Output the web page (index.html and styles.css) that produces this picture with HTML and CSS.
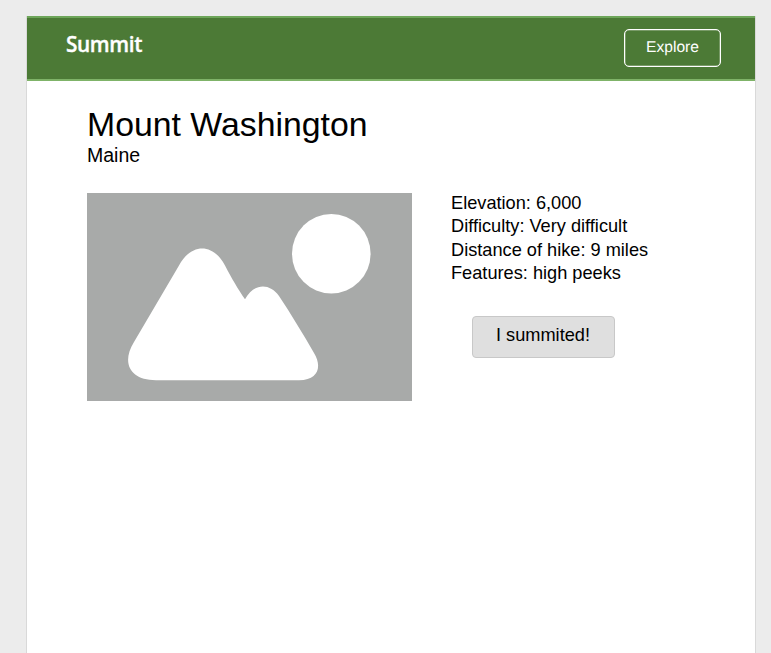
FILE: index.html
```html
<!DOCTYPE html>
<html lang="en">
<head>
<meta charset="utf-8">
<title>Summit</title>
<link rel="stylesheet" href="styles.css">
</head>
<body>
<div class="page">
  <header class="bar">
    <div class="brand">Summit</div>
    <button class="explore">Explore</button>
  </header>
  <main class="content">
    <h1 class="title">Mount Washington</h1>
    <div class="place">Maine</div>
    <div class="columns">
      <svg class="photo" viewBox="0 0 325 208" width="325" height="208" aria-hidden="true">
        <rect width="325" height="208" fill="#a8aaa9"/>
        <ellipse cx="244.3" cy="60.700" rx="39.3" ry="39.8" fill="#fff"/>
        <path fill="#fff" d="M92 72.500C104 50 126 49.500 138 72.500C145 86 151 96 158 106.300C167 89.500 183 90 192 103C204 121 216 141 227 160C235 173 232 187.300 212 187.300H69C43 187.300 34 170 47 149Z"/>
      </svg>
      <section class="details">
        <ul class="facts">
          <li>Elevation: 6,000</li>
          <li>Difficulty: Very difficult</li>
          <li>Distance of hike: 9 miles</li>
          <li>Features: high peeks</li>
        </ul>
        <button class="summited">I summited!</button>
      </section>
    </div>
  </main>
</div>
</body>
</html>
```
FILE: styles.css
```css
* { box-sizing: border-box; }
html, body { height: 100%; }
body {
  margin: 0;
  padding: 16px 15px 0 26px;
  overflow: hidden;
  background: #ececec;
  color: #000;
  font-family: "Liberation Sans", Arial, sans-serif;
}
.page {
  height: 100%;
  background: #fff;
  border: solid #d9d9d9;
  border-width: 0 1px;
}
.bar {
  display: flex;
  justify-content: space-between;
  align-items: flex-start;
  height: 65px;
  padding: 12px 34px 0 39px;
  background: #4c7a36;
  border-top: 2px solid #6ea65a;
  border-bottom: 2px solid #7fb368;
}
.brand {
  color: #fff;
  font: 600 20.800px/28px "Open Sans", "Noto Sans", sans-serif;
  letter-spacing: -0.400px;
  -webkit-text-stroke: 0.350px #fff;
}
.explore {
  width: 97px;
  height: 38px;
  margin-top: -1px;
  padding: 0 0 1px;
  color: #fff;
  background: transparent;
  border: 1px solid #fff;
  box-shadow: inset 0 0 0 0.500px rgba(255, 255, 255, 0.5);
  border-radius: 5px;
  font: 15.600px "Liberation Sans", sans-serif;
  text-rendering: geometricPrecision;
}
.content { padding: 23px 60px 0; }
.title { margin: 0; font-size: 33.800px; line-height: 40px; font-weight: 400; }
.place { font-size: 19.500px; line-height: 22px; }
.columns { display: flex; gap: 39px; margin-top: 27px; }
.photo { display: block; flex: none; }
.facts {
  margin: -1px 0 0;
  padding: 0;
  list-style: none;
  font-size: 18.200px;
  line-height: 23.400px;
}
.summited {
  width: 143px;
  height: 42px;
  margin: 30px 0 0 21px;
  padding: 0 1px 3px 0;
  color: #000;
  background: #dfdfdf;
  border: 1px solid #c8c8c8;
  border-radius: 4px;
  font: 18.200px "Liberation Sans", sans-serif;
}
```
